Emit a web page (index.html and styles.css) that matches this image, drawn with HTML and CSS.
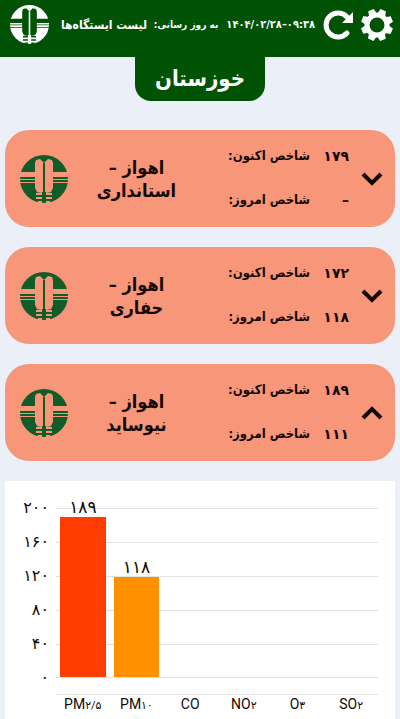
FILE: index.html
```
<!DOCTYPE html>
<html lang="fa">

<head>
	<meta charset="UTF-8">
	<meta name="viewport" content="width=device-width, initial-scale=1.0">
	<title>لیست ایستگاه‌ها</title>
	<link rel="stylesheet" href="styles.css">
</head>

<body>

	<!-- shared shapes -->
	<svg class="defs" aria-hidden="true">
		<mask id="logo-cut">
			<rect width="48" height="48" fill="white" />
			<path d="M15 8L16 5L20 4L24 8L28 4L32 5L33 8V33L31 37H17L15 33Z" fill="black" />
			<path d="M0 17H48V22H0ZM0 24H48V25H0ZM0 27H48V28H0Z" fill="black" />
			<path d="M23 8H25V48H23Z" fill="white" />
			<path d="M16 38L22 37V40H16ZM26 37L32 38V40H26ZM16 42H22V44H16ZM26 42H32V44H26ZM18 46H22V48H18ZM26 46H30V48H26Z" fill="black" />
		</mask>
		<symbol id="logo" viewBox="0 0 48 48">
			<circle cx="24" cy="24" r="24" mask="url(#logo-cut)" />
		</symbol>
		<symbol id="chevron" viewBox="0 0 22 14">
			<path d="M2 2L11 11L20 2" fill="none" stroke="currentColor" stroke-width="4" />
		</symbol>
	</svg>

	<header class="topbar">
		<svg class="topbar-logo"><use href="#logo" /></svg>
		<h1 class="topbar-title">لیست ایستگاه‌ها</h1>
		<span class="topbar-label">به روز رسانی:</span>
		<time class="topbar-time" datetime="1404-02-28 09:38">۱۴۰۴/۰۲/۲۸–۰۹:۳۸</time>
		<button class="icon-button" type="button" aria-label="بازخوانی">
			<svg width="32" height="32" viewBox="0 0 32 32">
				<path d="M24 8A12 12 0 1 0 24 24" fill="none" stroke="currentColor" stroke-width="5" stroke-linecap="round" />
				<path d="M30 3V14H19Z" fill="currentColor" />
			</svg>
		</button>
		<button class="icon-button" type="button" aria-label="تنظیمات">
			<svg width="32" height="32" viewBox="0 0 32 32">
				<circle cx="16" cy="16" r="10" fill="none" stroke="currentColor" stroke-width="5" />
				<g fill="currentColor" transform="rotate(23 16 16)">
					<path id="teeth" d="M12 5L13 0H19L20 5ZM12 27L13 32H19L20 27Z" />
					<use href="#teeth" transform="rotate(45 16 16)" />
					<use href="#teeth" transform="rotate(90 16 16)" />
					<use href="#teeth" transform="rotate(135 16 16)" />
				</g>
			</svg>
		</button>
	</header>

	<h2 class="province">خوزستان</h2>

	<main class="stations">
		<section class="station">
			<svg class="station-logo"><use href="#logo" /></svg>
			<h3 class="station-name">اهواز –<br>استانداری</h3>
			<dl class="station-index">
				<dt>شاخص اکنون:</dt>
				<dd>۱۷۹</dd>
				<dt>شاخص امروز:</dt>
				<dd>–</dd>
			</dl>
			<button class="toggle" type="button" aria-expanded="false" aria-label="نمایش نمودار">
				<svg width="22" height="14"><use href="#chevron" /></svg>
			</button>
		</section>

		<section class="station">
			<svg class="station-logo"><use href="#logo" /></svg>
			<h3 class="station-name">اهواز –<br>حفاری</h3>
			<dl class="station-index">
				<dt>شاخص اکنون:</dt>
				<dd>۱۷۲</dd>
				<dt>شاخص امروز:</dt>
				<dd>۱۱۸</dd>
			</dl>
			<button class="toggle" type="button" aria-expanded="false" aria-label="نمایش نمودار">
				<svg width="22" height="14"><use href="#chevron" /></svg>
			</button>
		</section>

		<section class="station">
			<svg class="station-logo"><use href="#logo" /></svg>
			<h3 class="station-name">اهواز –<br>نیوساید</h3>
			<dl class="station-index">
				<dt>شاخص اکنون:</dt>
				<dd>۱۸۹</dd>
				<dt>شاخص امروز:</dt>
				<dd>۱۱۱</dd>
			</dl>
			<button class="toggle" type="button" aria-expanded="true" aria-label="بستن نمودار">
				<svg width="22" height="14"><use href="#chevron" /></svg>
			</button>
		</section>

		<section class="chart">
			<div class="y-axis">
				<span>۲۰۰</span>
				<span>۱۶۰</span>
				<span>۱۲۰</span>
				<span>۸۰</span>
				<span>۴۰</span>
				<span>۰</span>
			</div>
			<div class="plot">
				<div class="bar very-high" style="height: 94.5%"><span>۱۸۹</span></div>
				<div class="bar high" style="height: 59%"><span>۱۱۸</span></div>
			</div>
			<div class="x-axis">
				<span>PM<small>۲/۵</small></span>
				<span>PM<small>۱۰</small></span>
				<span>CO</span>
				<span>NO<small>۲</small></span>
				<span>O<small>۳</small></span>
				<span>SO<small>۲</small></span>
			</div>
		</section>
	</main>

</body>

</html>
```
FILE: styles.css
```
* {
	box-sizing: border-box;
}

body {
	font-family: 'DejaVu Sans Condensed', 'DejaVu Sans', sans-serif;
	background-color: #ebeff7;
	color: #140804;
	display: flex;
	flex-direction: column;
	min-height: 100vh;
	margin: 0;
}

h1,
h2,
h3,
dl,
dd {
	margin: 0;
}

button {
	background: none;
	border: none;
	padding: 0;
	color: inherit;
	cursor: pointer;
}

button svg {
	display: block;
}

.defs {
	position: absolute;
	width: 0;
	height: 0;
}

.topbar {
	background-color: #005205;
	color: white;
	display: flex;
	align-items: center;
	height: 57px;
	padding: 0 7px 8px 10px;
	white-space: nowrap;
}

.topbar-logo {
	width: 39px;
	height: 39px;
	margin-right: 12px;
	fill: currentColor;
	flex: none;
}

.topbar-title {
	direction: rtl;
	font-size: 12px;
}

.topbar-label {
	direction: rtl;
	font-size: 10px;
	font-weight: bold;
	margin-left: auto;
}

.topbar-time {
	font-size: 11px;
	font-weight: bold;
	margin: 0 8px;
}

.icon-button {
	flex: none;
}

.icon-button + .icon-button {
	margin-left: 6px;
}

.province {
	align-self: center;
	background-color: #005205;
	border-radius: 0 0 16px 16px;
	color: white;
	font-size: 22px;
	line-height: 44px;
	min-width: 130px;
	padding: 0 20px;
	text-align: center;
}

.stations {
	display: flex;
	flex-direction: column;
	flex: 1;
	gap: 20px;
	padding: 29px 5px 0;
}

.station {
	background-color: #f79679;
	border-radius: 24px;
	display: grid;
	grid-template-columns: 48px 1fr 120px 22px;
	align-items: center;
	column-gap: 12px;
	height: 97px;
	padding: 0 12px 0 15px;
}

.station-logo {
	width: 48px;
	height: 48px;
	fill: #115c28;
}

.station-name {
	direction: rtl;
	font-size: 18px;
	line-height: 23px;
	padding-right: 24px;
	text-align: center;
	white-space: nowrap;
}

.station-index {
	display: grid;
	grid-template-columns: 81px 1fr;
	font-size: 13px;
	font-weight: bold;
	line-height: 20px;
	row-gap: 24px;
	margin-bottom: 2px;
}

.station-index dt {
	direction: rtl;
	white-space: nowrap;
}

.station-index dd {
	font-family: 'DejaVu Sans', sans-serif;
	font-size: 14px;
	text-align: right;
}

.toggle[aria-expanded="true"] svg {
	transform: rotate(180deg);
}

.chart {
	background-color: white;
	display: grid;
	grid-template-columns: 44px 1fr;
	grid-template-rows: 170px 1fr;
	column-gap: 7px;
	row-gap: 16px;
	flex: 1;
	padding: 27px 17px 8px 0;
}

/* labels are centered on the grid lines */
.y-axis {
	display: flex;
	flex-direction: column;
	justify-content: space-between;
	font-family: 'DejaVu Sans', sans-serif;
	font-size: 16px;
	line-height: 20px;
	margin: -10px 0;
	text-align: right;
}

.plot {
	background: repeating-linear-gradient(#e2e2e2 0 1px, transparent 1px 34px);
	border-bottom: 1px solid #e2e2e2;
	display: grid;
	grid-template-columns: repeat(6, 1fr);
	align-items: end;
}

.bar {
	margin: 0 4px;
	font-family: 'DejaVu Sans', sans-serif;
	font-size: 17px;
	line-height: 20px;
	text-align: center;
}

.bar span {
	display: block;
	margin-top: -20px;
}

.very-high {
	background-color: #ff3d00;
}

.high {
	background-color: #ff9100;
}

.x-axis {
	border-top: 1px solid #e2e2e2;
	display: grid;
	grid-column: 2;
	grid-template-columns: repeat(6, 1fr);
	font-family: Roboto, 'DejaVu Sans', sans-serif;
	font-size: 14px;
	line-height: 18px;
	text-align: center;
	white-space: nowrap;
}

.x-axis small {
	font-size: 11px;
}
```
